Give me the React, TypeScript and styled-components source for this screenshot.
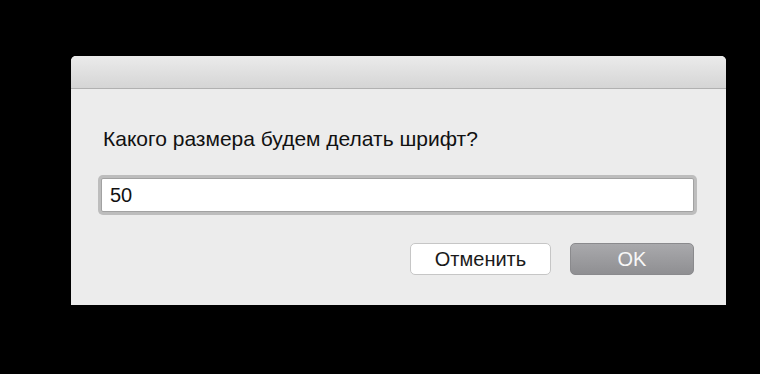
import React from "react";
import styled, { createGlobalStyle } from "styled-components";

const GlobalStyle = createGlobalStyle`
  html, body {
    margin: 0;
    padding: 0;
    background: #000;
    width: 760px;
    height: 374px;
    overflow: hidden;
  }
  body {
    font-family: "Liberation Sans", Arial, sans-serif;
  }
`;

const Screen = styled.div`
  width: 760px;
  height: 374px;
  padding: 56px 0 0 71px;
  box-sizing: border-box;
  background: #000;
`;

const Dialog = styled.div`
  width: 655px;
  height: 249px;
  display: flex;
  flex-direction: column;
  background: #ececec;
  border-radius: 5px 5px 0 0;
  overflow: hidden;
`;

const TitleBar = styled.div`
  height: 32px;
  flex: none;
  background: linear-gradient(#ebebeb, #d5d5d5);
  border-bottom: 1px solid #b1b1b1;
`;

const Body = styled.div`
  flex: 1;
  display: flex;
  flex-direction: column;
  padding: 38px 29px 0 27px;
`;

const Prompt = styled.p`
  margin: 0;
  font-size: 21px;
  line-height: 24px;
  color: #111;
  padding-left: 5px;
`;

const Field = styled.input`
  margin: 27px 3px 0;
  height: 34px;
  box-sizing: border-box;
  border: 1px solid #a2a2a2;
  border-radius: 2px;
  box-shadow: 0 0 0 3px #bdbdbd;
  background: #fff;
  padding: 0 0 0 8px;
  font-family: "Liberation Sans", Arial, sans-serif;
  font-size: 20px;
  color: #111;
  outline: none;
`;

const Actions = styled.div`
  display: flex;
  justify-content: flex-end;
  gap: 19px;
  margin-top: 31px;
  padding-right: 3px;
`;

const Button = styled.button<{ $primary?: boolean }>`
  height: 32px;
  width: ${({ $primary }) => ($primary ? "124px" : "141px")};
  box-sizing: border-box;
  border-radius: 5px;
  font-family: "Liberation Sans", Arial, sans-serif;
  font-size: 20px;
  padding: 0;
  border: 1px solid ${({ $primary }) => ($primary ? "#8a8a8d" : "#c6c6c6")};
  background: ${({ $primary }) =>
    $primary ? "linear-gradient(#a9a9ac, #8f8f92)" : "#fff"};
  color: ${({ $primary }) => ($primary ? "#f7f7f7" : "#1a1a1a")};
`;

export default function App() {
  return (
    <>
      <GlobalStyle />
      <Screen>
        <Dialog>
          <TitleBar />
          <Body>
            <Prompt>Какого размера будем делать шрифт?</Prompt>
            <Field defaultValue="50" />
            <Actions>
              <Button>Отменить</Button>
              <Button $primary>OK</Button>
            </Actions>
          </Body>
        </Dialog>
      </Screen>
    </>
  );
}
